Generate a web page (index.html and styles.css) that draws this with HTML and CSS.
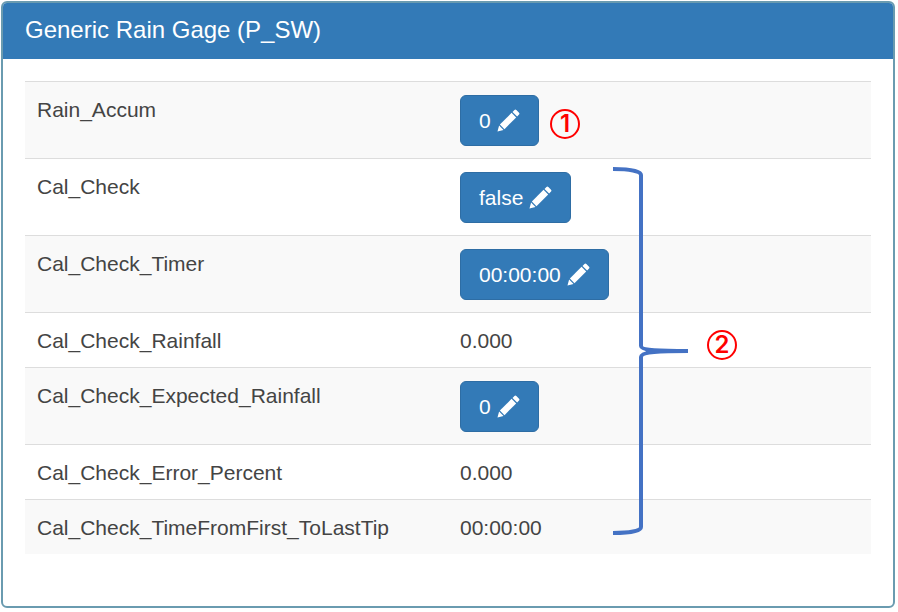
FILE: index.html
```
<!DOCTYPE html>
<html lang="en">
<head>
    <meta charset="UTF-8">
    <meta name="viewport" content="width=device-width, initial-scale=1.0">
    <title>Generic Rain Gage (P_SW)</title>
    <link rel="stylesheet" href="styles.css">
</head>
<body>
    <!-- pencil icon shared by all edit buttons -->
    <svg class="sprite" aria-hidden="true">
        <symbol id="pencil" viewBox="0 0 24 24">
            <path d="M0.5 23.5 L2.2 17.2 L6.8 21.8 Z"/>
            <path d="M3 16.2 L15.2 4 L20 8.8 L7.8 21 Z"/>
            <path d="M16.2 3 L18.2 1 Q19.2 0 20.2 1 L23 3.8 Q24 4.8 23 5.8 L21 7.8 Z"/>
        </symbol>
    </svg>

    <div class="panel">
        <h1 class="panel-heading">Generic Rain Gage (P_SW)</h1>
        <div class="panel-body">
            <table class="table">
                <tbody>
                    <tr>
                        <th scope="row">Rain_Accum</th>
                        <td><button type="button" class="btn">0 <svg class="icon"><use href="#pencil"/></svg></button></td>
                    </tr>
                    <tr>
                        <th scope="row">Cal_Check</th>
                        <td><button type="button" class="btn">false <svg class="icon"><use href="#pencil"/></svg></button></td>
                    </tr>
                    <tr>
                        <th scope="row">Cal_Check_Timer</th>
                        <td><button type="button" class="btn">00:00:00 <svg class="icon"><use href="#pencil"/></svg></button></td>
                    </tr>
                    <tr>
                        <th scope="row">Cal_Check_Rainfall</th>
                        <td>0.000</td>
                    </tr>
                    <tr>
                        <th scope="row">Cal_Check_Expected_Rainfall</th>
                        <td><button type="button" class="btn">0 <svg class="icon"><use href="#pencil"/></svg></button></td>
                    </tr>
                    <tr>
                        <th scope="row">Cal_Check_Error_Percent</th>
                        <td>0.000</td>
                    </tr>
                    <tr>
                        <th scope="row">Cal_Check_TimeFromFirst_ToLastTip</th>
                        <td>00:00:00</td>
                    </tr>
                </tbody>
            </table>

            <!-- callouts drawn over the value column -->
            <div class="callouts">
                <span class="callout callout-one">1</span>
                <svg class="brace" viewBox="0 0 76 370" aria-hidden="true">
                    <path d="M0 3 C16 3 28 5 28 9 V180 C28 184 42 185 75 185 C42 185 28 186 28 191 V361 C28 365 16 367 0 367"/>
                </svg>
                <span class="callout callout-two">2</span>
            </div>
        </div>
    </div>
</body>
</html>
```
FILE: styles.css
```
* {
    box-sizing: border-box;
}
body {
    margin: 0;
    padding: 1px 3px 4px 1px;
    background-color: white;
    color: #444;
    font-family: Arial, "Liberation Sans", sans-serif;
    font-size: 21px;
    line-height: 29px;
}
.sprite {
    display: none;
}
.panel {
    border: 2px solid #6a9bb0;
    border-radius: 6px;
    overflow: hidden;
}
.panel-heading {
    margin: -2px -2px 0;
    padding: 14px 24px;
    background-color: #337ab7;
    color: white;
    font-size: 24px;
    font-weight: normal;
    line-height: 30px;
}
.panel-body {
    position: relative;
    padding: 22px 22px 52px;
}

.table {
    width: 100%;
    table-layout: fixed;
    border-collapse: separate;
    border-spacing: 0;
}
.table th, .table td {
    width: 50%;
    padding: 13px 12px 12px;
    border-top: 1px solid #ddd;
    font-weight: normal;
    text-align: left;
    vertical-align: top;
}
.table tr:nth-child(odd) {
    background-color: #f9f9f9;
}

.btn {
    display: flex;
    align-items: center;
    gap: 6px;
    padding: 10px 18px;
    border: 1px solid #2e6da4;
    border-radius: 6px;
    background-color: #337ab7;
    color: white;
    font-family: inherit;
    font-size: 21px;
    line-height: 29px;
    cursor: pointer;
}
.btn:hover {
    background-color: #286090;
}
.icon {
    width: 23px;
    height: 23px;
    fill: white;
}

.callouts {
    position: absolute;
    top: 22px;
    left: 50%;
    pointer-events: none;
}
.callout {
    position: absolute;
    width: 30px;
    height: 30px;
    border: 2px solid red;
    border-radius: 50%;
    color: red;
    font-family: Inter, sans-serif;
    font-size: 24px;
    font-weight: 600;
    line-height: 26px;
    text-align: center;
}
.callout-one {
    top: 28px;
    left: 102px;
}
.callout-two {
    top: 249px;
    left: 259px;
}
.brace {
    position: absolute;
    top: 85px;
    left: 165px;
    width: 76px;
    height: 370px;
    fill: none;
    stroke: #4472c4;
    stroke-width: 4;
}
```
